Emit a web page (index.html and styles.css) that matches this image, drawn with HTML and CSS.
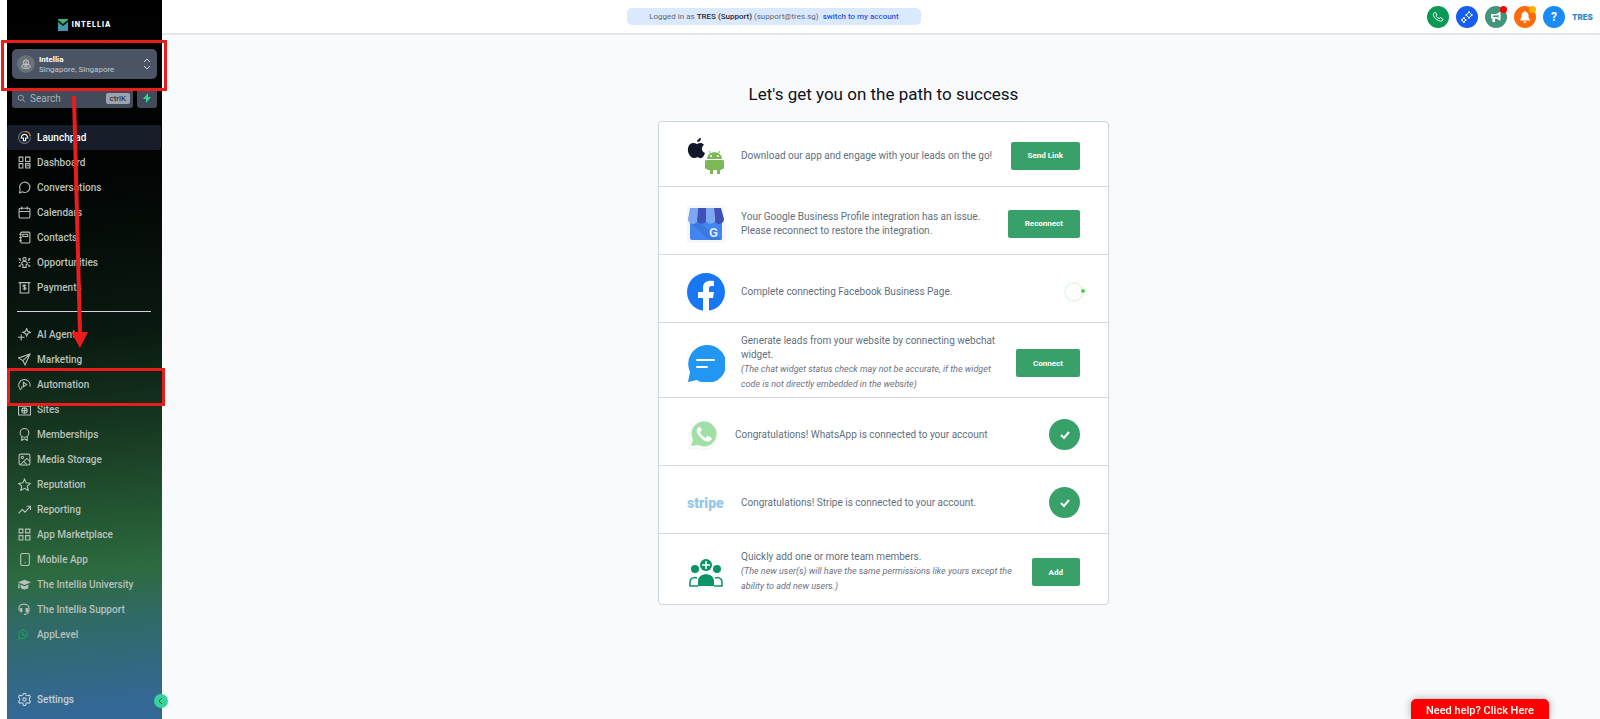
FILE: index.html
```html
<!DOCTYPE html>
<html lang="en">

<head>
    <meta charset="UTF-8">
    <meta name="viewport" content="width=device-width, initial-scale=1.0">
    <title>Launchpad</title>
    <link rel="stylesheet" href="styles.css">
</head>

<body>
    <aside class="sidebar">
        <a class="logo" href="#">
            <svg width="10" height="12" viewBox="0 0 10 12"><path d="M0 0h10v12H0z" fill="#3f9d8f"/><path d="M0 6l5 3 5-3v6H0z" fill="#4c8fb4"/><path d="M0 1l5 4 5-4v2L5 7 0 3z" fill="#06150f"/><path d="M0 0h10L5 3.500z" fill="#43b36c"/></svg>
            <span>INTELLIA</span>
        </a>
        <button class="account" type="button">
            <span class="avatar">
                <svg class="icon" viewBox="0 0 24 24"><circle cx="12" cy="8" r="6"/><path d="M12 6v6M7 13c-4 1-5 3-5 5 0 2 2 4 4 4h12c2 0 4-2 4-4s-1-4-5-5M7 17h10"/></svg>
            </span>
            <span class="account-text">
                <b>Intellia</b>
                <span>Singapore, Singapore</span>
            </span>
            <svg class="arrows" viewBox="0 0 8 12"><path d="M1 4l3-3 3 3M1 8l3 3 3-3"/></svg>
        </button>
        <div class="search-row">
            <label class="search">
                <svg class="icon" viewBox="0 0 24 24"><circle cx="10" cy="10" r="7"/><path d="M15 15l7 7"/></svg>
                <input type="text" placeholder="Search" aria-label="Search">
                <kbd>ctrlK</kbd>
            </label>
            <button class="quick" type="button" aria-label="Quick actions">
                <svg width="8" height="10" viewBox="0 0 8 10"><path d="M5 0L0 6h3L3 10 8 4H5z" fill="#34d399"/></svg>
            </button>
        </div>

        <nav class="nav">
            <a class="active" href="#"><svg class="icon" viewBox="0 0 24 24"><path d="M12 1a11 11 0 1 0 11 11" stroke="#6b7280"/><path d="M12 1a11 11 0 0 1 11 9" stroke="#f08a3c"/><path d="M10 18v-5H6c0-4 2-6 6-7 4 1 6 3 6 7h-4v5z"/></svg>Launchpad</a>
            <a href="#"><svg class="icon" viewBox="0 0 24 24"><path d="M2 2h7v8H2zM14 2h8v8h-8zM2 14h7v8H2zM14 14h8v8h-8zM14 18h8"/></svg>Dashboard</a>
            <a href="#"><svg class="icon" viewBox="0 0 24 24"><path d="M3 22l1-6a9.500 9.500 0 1 1 4 4z"/></svg>Conversations</a>
            <a href="#"><svg class="icon" viewBox="0 0 24 24"><rect x="2" y="4" width="20" height="18" rx="2"/><path d="M2 10h20M7 1v6M17 1v6"/></svg>Calendars</a>
            <a href="#"><svg class="icon" viewBox="0 0 24 24"><rect x="5" y="2" width="17" height="20" rx="2"/><path d="M9 6h9v4H9zM2 6h5M2 12h5M2 18h5"/></svg>Contacts</a>
            <a href="#"><svg class="icon" viewBox="0 0 24 24"><circle cx="12" cy="6" r="3"/><path d="M9 21v-5l-2-1v-2c0-2 2-3 5-3s5 1 5 3v2l-2 1v5zM1 5h3v3M20 8V5h3M1 19h3v-3M20 16v3h3M2 12h2M20 12h2M5 9l-3-4M19 9l3-4M5 16l-3 3M19 16l3 3"/></svg>Opportunities</a>
            <a href="#"><svg class="icon" viewBox="0 0 24 24"><path d="M1 3h22M4 3v19h16V3M15 9c-1-2-6-2-6 0 0 3 6 2 6 5 0 2-5 2-6 0M12 7v10"/></svg>Payments</a>
            <hr>
            <a href="#"><svg class="icon" viewBox="0 0 24 24"><path d="M16 1l2 5 5 2-5 2-2 5-2-5-5-2 5-2zM6 12v11M0 17h12"/></svg>AI Agents</a>
            <a href="#"><svg class="icon" viewBox="0 0 24 24"><path d="M22 2L1 9l8 5 4 8zM22 2L9 14"/></svg>Marketing</a>
            <a href="#"><svg class="icon" viewBox="0 0 24 24"><path d="M6 22A10.500 10.500 0 1 1 22 16M10 8v8l6-4zM7 15v5"/></svg>Automation</a>
            <a href="#"><svg class="icon" viewBox="0 0 24 24"><path d="M1 2h22v20H1zM1 6h22"/><circle cx="12" cy="14" r="5"/><path d="M7 14h10M12 9v10"/></svg>Sites</a>
            <a href="#"><svg class="icon" viewBox="0 0 24 24"><circle cx="12" cy="9" r="8"/><path d="M7 15v8l5-3 5 3v-8"/></svg>Memberships</a>
            <a href="#"><svg class="icon" viewBox="0 0 24 24"><rect x="2" y="2" width="20" height="20" rx="3"/><circle cx="8" cy="8" r="2"/><path d="M5 21L16 10l6 5M11 16l5 5"/></svg>Media Storage</a>
            <a href="#"><svg class="icon" viewBox="0 0 24 24"><path d="M12 2l3 7 8 1-6 5 2 8-7-4-7 4 2-8-6-5 8-1z"/></svg>Reputation</a>
            <a href="#"><svg class="icon" viewBox="0 0 24 24"><path d="M1 19l7-7 5 5 10-11M16 6h7v7"/></svg>Reporting</a>
            <a href="#"><svg class="icon" viewBox="0 0 24 24"><path d="M2 2h7v7H2zM14 2h8v7h-8zM2 14h7v8H2zM14 14h8v8h-8z"/></svg>App Marketplace</a>
            <a href="#"><svg class="icon" viewBox="0 0 24 24"><rect x="5" y="1" width="16" height="22" rx="3"/><path d="M13 17v2"/></svg>Mobile App</a>
            <a href="#"><svg class="icon solid" viewBox="0 0 24 24"><path d="M12 3L0 8l12 5 12-5zM5 12v6c3 4 11 4 14 0v-6l-7 3zM1 10h2v9H0z"/></svg>The Intellia University</a>
            <a href="#"><svg class="icon" viewBox="0 0 24 24"><path d="M3 15C-1 6 5 2 11 2s11 4 9 13c-1 4-4 6-9 6"/><path d="M5 10h2v6H5zM15 10h3v6h-3z" fill="currentColor"/></svg>The Intellia Support</a>
            <a href="#"><svg class="icon green" viewBox="0 0 24 24"><path d="M1 22l2-6a9.500 9.500 0 1 1 4 4z"/><path d="M8 7c-1 4 4 10 8 9l1-2-3-2-1 1-3-3 1-1-1-2z"/></svg>AppLevel</a>
        </nav>
        <a class="settings" href="#"><svg class="icon" viewBox="0 0 24 24"><circle cx="12" cy="12" r="3"/><path d="M10 1h4l1 3 3 1 3-1 2 3-2 3v3l2 3-2 3-3-1-3 1-1 4h-4l-1-4-3-1-3 1-2-3 2-3v-3L1 7l2-3 3 1 3-1z"/></svg>Settings</a>
        <button class="collapse" type="button" aria-label="Collapse menu">
            <svg width="8" height="8" viewBox="0 0 8 8"><path d="M5 1L2 4l3 3"/></svg>
        </button>
    </aside>

    <div class="page">
        <header class="header">
            <div class="notice">
                <p>Logged in as <b>TRES (Support)</b> (support@tres.sg) <a href="#">switch to my account</a></p>
            </div>
            <div class="tools">
                <button class="tool phone" type="button" aria-label="Phone">
                    <svg viewBox="0 0 24 24"><path d="M4 4c-3 3 0 9 4 12s10 6 13 3l1-2-5-4-3 2c-3-1-5-3-6-5l2-3-4-5z" fill="none" stroke="#fff" stroke-width="2"/></svg>
                </button>
                <button class="tool spark" type="button" aria-label="Assistant">
                    <svg viewBox="0 0 24 24"><path d="M16 1l2 4 5 3-5 3-2 4-2-4-5-3 5-3zM6 12l1 4 4 2-4 2-1 4-2-4-4-2 4-2z" fill="none" stroke="#fff" stroke-width="2"/></svg>
                </button>
                <button class="tool news" type="button" aria-label="News">
                    <svg viewBox="0 0 24 24"><path d="M2 6h11l6-4h2v17h-2l-6-4h-3v7H5v-7H2z" fill="#fff"/><path d="M6 9h8l3-2v7l-3-2H6z" fill="#43957a"/></svg>
                    <i class="dot red"></i>
                </button>
                <button class="tool bell" type="button" aria-label="Notifications">
                    <svg viewBox="0 0 24 24"><path d="M12 0c1 0 2 1 2 2 4 1 5 4 5 8 0 5 2 6 3 8v1H2v-1c1-2 3-3 3-8 0-4 1-7 5-8 0-1 1-2 2-2zM9 21h6c0 4-6 4-6 0z" fill="#fff"/></svg>
                    <i class="dot amber"></i>
                </button>
                <button class="tool help" type="button" aria-label="Help">?</button>
                <a class="user" href="#">TRES</a>
            </div>
        </header>

        <main class="main">
            <h1>Let's get you on the path to success</h1>
            <ul class="steps">
                <li>
                    <svg class="pic" viewBox="0 0 38 38">
                        <path d="M14 1c0 3-2 4-4 4 0-2 2-4 4-4zM10 7c2-1 5-2 7 1-3 2-3 6 1 8-1 3-3 6-5 5-2-1-3-1-5 0C4 22 0 16 1 11c1-5 5-6 9-4z" fill="#111827"/>
                        <path d="M20 22c0-9 15-9 15 0zM20 23h15v9c0 1-1 1-2 1v4h-3v-4h-4v4h-3v-4c-2 0-3 0-3-1z" fill="#7cb855"/>
                        <path d="M19 24v7M36 24v7" stroke="#7cb855" stroke-width="2" stroke-linecap="round"/>
                        <path d="M22 14l2 3M33 14l-2 3" stroke="#7cb855"/>
                        <circle cx="24" cy="19" r="1" fill="#fff"/><circle cx="31" cy="19" r="1" fill="#fff"/>
                    </svg>
                    <p>Download our app and engage with your leads on the go!</p>
                    <button class="btn" type="button">Send Link</button>
                </li>
                <li>
                    <svg class="pic" viewBox="0 0 38 38">
                        <path d="M0 0h38v38H0z" fill="#f6f7f8"/>
                        <path d="M3 16h32v17c0 1-1 2-2 2H5c-1 0-2-1-2-2z" fill="#4285f0"/>
                        <path d="M13 18l22 17H22L5 19z" fill="#3c78dc"/>
                        <path d="M3 3h8l-1 12c0 6-9 5-9-1z" fill="#7ba7f3"/>
                        <path d="M11 3h8v12c0 5-9 5-9 0z" fill="#3f51b5"/>
                        <path d="M19 3h8l1 12c0 5-9 5-9 0z" fill="#7ba7f3"/>
                        <path d="M27 3h7l3 11c0 6-9 7-9 1z" fill="#3f51b5"/>
                        <text class="g" x="22" y="32">G</text>
                    </svg>
                    <p>Your Google Business Profile integration has an issue. Please reconnect to restore the integration.</p>
                    <button class="btn" type="button">Reconnect</button>
                </li>
                <li>
                    <svg class="pic" viewBox="0 0 38 38">
                        <circle cx="19" cy="19" r="19" fill="#1877f2"/>
                        <path d="M16 38V25h-5v-6h5v-4c0-6 4-8 11-7v5c-4 0-5 0-5 3v3h5l-1 6h-4v13z" fill="#fff"/>
                    </svg>
                    <p>Complete connecting Facebook Business Page.</p>
                    <span class="spinner"></span>
                </li>
                <li class="tall">
                    <svg class="pic" viewBox="0 0 38 38">
                        <path d="M3 28A19 19 0 1 1 10 36L1 38z" fill="#2196f3"/>
                        <path d="M10 16h17M10 23h10" stroke="#fff" stroke-width="2" stroke-linecap="round"/>
                    </svg>
                    <p>Generate leads from your website by connecting webchat widget.
                        <em>(The chat widget status check may not be accurate, if the widget code is not directly embedded in the website)</em></p>
                    <button class="btn" type="button">Connect</button>
                </li>
                <li>
                    <svg class="pic small" viewBox="0 0 32 32">
                        <path d="M2 30l2-7a14 14 0 1 1 6 6z" fill="#fff" stroke="#f0f1f1"/>
                        <path d="M4 27l2-6a12.500 12.500 0 1 1 5 5z" fill="#a0e0a6"/>
                        <path d="M12 8c-5 3-1 8 2 11s8 6 11 1c0-1-4-4-5-3l-1 2c-3-1-5-3-6-6l2-2-2-3z" fill="#fff"/>
                    </svg>
                    <p>Congratulations! WhatsApp is connected to your account</p>
                    <span class="done"><svg viewBox="0 0 12 12"><path d="M2 6l3 3 5-6"/></svg></span>
                </li>
                <li>
                    <span class="stripe">stripe</span>
                    <p>Congratulations! Stripe is connected to your account.</p>
                    <span class="done"><svg viewBox="0 0 12 12"><path d="M2 6l3 3 5-6"/></svg></span>
                </li>
                <li>
                    <svg class="pic" viewBox="0 0 38 38">
                        <g fill="#0b9565">
                            <circle cx="19" cy="12" r="6"/><circle cx="8" cy="16" r="4"/><circle cx="30" cy="16" r="4"/>
                            <path d="M11 33v-5c0-9 16-9 16 0v5z"/>
                        </g>
                        <path d="M11 33H3v-4c0-4 4-5 7-4M27 33h8v-4c0-4-4-5-7-4" fill="none" stroke="#0b9565" stroke-width="1.500"/>
                        <path d="M19 8v8M15 12h8" stroke="#fff" stroke-width="1.500"/>
                    </svg>
                    <p>Quickly add one or more team members.
                        <em>(The new user(s) will have the same permissions like yours except the ability to add new users.)</em></p>
                    <button class="btn" type="button">Add</button>
                </li>
            </ul>
        </main>
    </div>

    <button class="need-help" type="button">Need help? Click Here</button>

    <!-- walkthrough marks, drawn over the menu -->
    <div class="mark mark-account"></div>
    <div class="mark mark-automation"></div>
    <svg class="mark-arrow" width="20" height="252" viewBox="0 0 20 252"><path d="M4 0L10 238" stroke="#ea1c1c" stroke-width="4"/><path d="M1 236h17l-8 16z" fill="#ea1c1c"/></svg>
</body>

</html>
```

FILE: styles.css
```css
* {
    box-sizing: border-box;
    margin: 0;
    padding: 0;
}

body {
    display: flex;
    min-height: 100vh;
    padding-left: 7px;
    font-family: Roboto, "Liberation Sans", sans-serif;
    font-size: 10px;
    background: white;
}

a {
    text-decoration: none;
}

button {
    border: 0;
    font-family: inherit;
    cursor: pointer;
}

.icon {
    flex: none;
    width: 13px;
    height: 13px;
    fill: none;
    stroke: currentColor;
    stroke-width: 2;
}

.icon.solid {
    fill: currentColor;
    stroke: none;
}

.icon.green {
    width: 11px;
    margin-right: 2px;
    color: #16a85f;
}

/* sidebar */
.sidebar {
    position: relative;
    display: flex;
    flex-direction: column;
    flex: none;
    width: 155px;
    padding-bottom: 7px;
    background: linear-gradient(175deg, #000 0%, #020504 25%, #0a1a10 47%, #173821 60%, #255a35 73%, #2c6b3f 79%, #306a62 85%, #346894 97%);
}

.logo {
    display: flex;
    align-items: center;
    justify-content: center;
    gap: 4px;
    height: 49px;
    color: white;
    font: 800 7px Inter, sans-serif;
    letter-spacing: 1px;
}

.account {
    display: flex;
    align-items: center;
    gap: 4px;
    height: 30px;
    margin: 0 5px;
    padding: 0 6px 0 5px;
    border-radius: 5px;
    background: #4a5464;
    color: #c3c8cf;
    text-align: left;
}

.avatar {
    display: flex;
    align-items: center;
    justify-content: center;
    width: 18px;
    height: 18px;
    border-radius: 50%;
    background: #6b7078;
    color: #e5e7eb;
}

.avatar .icon {
    width: 10px;
    height: 10px;
}

.account-text {
    flex: 1;
    padding-top: 1px;
    font-size: 8px;
    line-height: 10px;
    white-space: nowrap;
}

.account-text b {
    display: block;
    color: white;
}

.arrows {
    width: 8px;
    height: 12px;
    fill: none;
    stroke: #d1d5db;
}

.search-row {
    display: flex;
    gap: 4px;
    margin: 9px 5px 17px;
}

.search {
    display: flex;
    align-items: center;
    flex: 1;
    gap: 4px;
    height: 20px;
    padding: 0 3px 0 5px;
    border-radius: 3px;
    background: #414b5a;
    color: #b5bac2;
}

.search .icon {
    width: 9px;
    height: 9px;
}

.search input {
    flex: 1;
    width: 0;
    border: 0;
    outline: 0;
    background: none;
    font: 10px Roboto, sans-serif;
    color: white;
}

.search input::placeholder {
    color: #aab0b9;
}

kbd {
    padding: 0 4px;
    border-radius: 2px;
    background: #9ca3af;
    color: #111827;
    font: 8px/11px Roboto, sans-serif;
}

.quick {
    display: flex;
    align-items: center;
    justify-content: center;
    width: 20px;
    border-radius: 3px;
    background: #414b5a;
}

.nav {
    flex: 1;
}

.nav a,
.settings {
    display: flex;
    align-items: center;
    gap: 6px;
    height: 25px;
    padding-left: 11px;
    color: #b9c1bc;
    font-weight: 500;
    white-space: nowrap;
}

.nav .active {
    margin-right: 1px;
    border-radius: 3px;
    background: #181e29;
    color: white;
}

.nav hr {
    margin: 11px 11px 10px 10px;
    border: 0;
    border-top: 1px solid #d8d3dc;
}

.settings {
    color: #c5d0d6;
}

.collapse {
    position: absolute;
    right: -6px;
    bottom: 11px;
    display: flex;
    align-items: center;
    justify-content: center;
    width: 14px;
    height: 14px;
    border-radius: 50%;
    background: #34d399;
}

.collapse svg {
    fill: none;
    stroke: #14532d;
}

/* header */
.page {
    display: flex;
    flex-direction: column;
    flex: 1;
}

.header {
    display: flex;
    align-items: center;
    height: 35px;
    border-bottom: 2px solid #e6e7e9;
    background: white;
}

.notice {
    display: flex;
    justify-content: center;
    flex: 1;
}

.notice p {
    padding: 0 22px;
    border-radius: 5px;
    background: #dbe9fe;
    color: #5d6877;
    font-size: 8px;
    line-height: 17px;
}

.notice b {
    color: #1f2937;
    font-weight: 500;
}

.notice a {
    margin-left: 2px;
    color: #2557eb;
    font-weight: 500;
}

.tools {
    display: flex;
    align-items: center;
    gap: 7px;
    width: 214px;
    padding-left: 41px;
}

.tool {
    position: relative;
    display: flex;
    align-items: center;
    justify-content: center;
    flex: none;
    width: 22px;
    height: 22px;
    border-radius: 50%;
    color: white;
    font-size: 12px;
    font-weight: 700;
}

.tool svg {
    width: 12px;
    height: 12px;
}

.phone {
    background: #089a52;
}

.spark {
    background: #155eef;
}

.news {
    background: #43957a;
}

.bell {
    background: #ff6a0a;
}

.help {
    background: #188bf6;
}

.dot {
    position: absolute;
    top: 0;
    right: 0;
    width: 7px;
    height: 7px;
    border-radius: 50%;
}

.red {
    background: red;
}

.amber {
    background: #ffb000;
}

.user {
    color: #2a86c8;
    font: 800 8px Inter, sans-serif;
}

/* launchpad */
.main {
    flex: 1;
    padding: 48px 0 48px 5px;
    background: #f9fafc;
}

h1 {
    color: #0c111d;
    font-size: 17px;
    font-weight: 400;
    line-height: 22px;
    text-align: center;
}

.steps {
    width: 451px;
    max-width: 100%;
    margin: 16px auto 0;
    border: 1px solid #cbd5e1;
    border-radius: 4px;
    background: white;
    list-style: none;
}

.steps li {
    display: flex;
    align-items: center;
    gap: 16px;
    min-height: 68px;
    padding: 6px 28px 0;
    border-bottom: 1px solid #d3dae4;
}

.steps li:first-child {
    min-height: 65px;
    padding-top: 3px;
}

.steps .tall {
    min-height: 75px;
}

.steps li:last-child {
    min-height: 70px;
    border-bottom: 0;
}

.steps p {
    flex: 1;
    color: #607080;
    line-height: 14px;
}

.steps em {
    display: block;
    color: #6b7280;
    font-size: 9px;
    line-height: 15px;
}

.pic {
    flex: none;
    width: 38px;
    height: 38px;
}

.pic.small {
    width: 32px;
    height: 32px;
}

.g {
    fill: #dbe7fd;
    font-size: 13px;
    font-weight: 700;
}

.stripe {
    width: 38px;
    color: #93c8ea;
    font-size: 14px;
    font-weight: 900;
}

.btn {
    height: 28px;
    padding: 0 17px;
    border-radius: 2px;
    background: #38a169;
    color: white;
    font-size: 8px;
    font-weight: 700;
}

.done {
    display: flex;
    align-items: center;
    justify-content: center;
    width: 31px;
    height: 31px;
    border-radius: 50%;
    background: #38a169;
}

.done svg {
    width: 12px;
    height: 12px;
    fill: none;
    stroke: white;
    stroke-width: 2;
}

.spinner {
    position: relative;
    width: 20px;
    height: 20px;
    margin-right: -4px;
    border: 2px solid #e8f8ea;
    border-radius: 50%;
}

.spinner:after {
    content: "";
    position: absolute;
    top: 5px;
    right: -3px;
    width: 4px;
    height: 4px;
    border-radius: 50%;
    background: #4cd352;
}

.need-help {
    position: fixed;
    right: 51px;
    bottom: 0;
    height: 20px;
    padding: 2px 15px 0;
    border-radius: 5px 5px 0 0;
    background: red;
    box-shadow: 0 0 8px rgba(0, 0, 0, .3);
    color: white;
    font-size: 11px;
    font-weight: 500;
}

/* walkthrough marks */
.mark {
    position: absolute;
    border: 3px solid #ea1c1c;
}

.mark-account {
    top: 40px;
    left: 1px;
    width: 166px;
    height: 51px;
}

.mark-automation {
    top: 368px;
    left: 7px;
    width: 158px;
    height: 38px;
}

.mark-arrow {
    position: absolute;
    top: 96px;
    left: 70px;
}
```
